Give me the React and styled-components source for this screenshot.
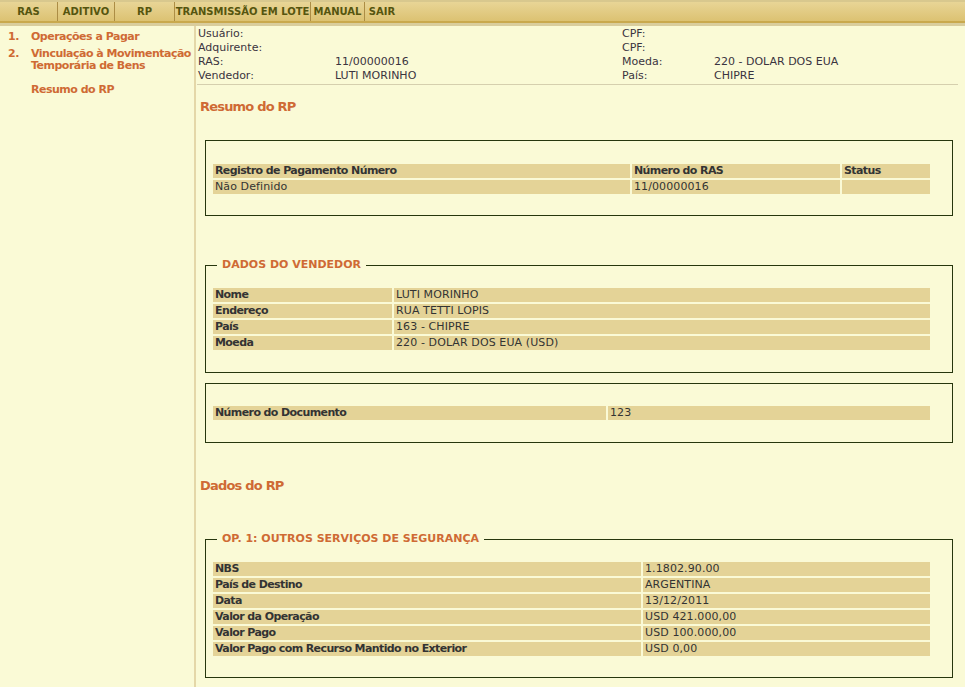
import React from 'react';
import styled, { createGlobalStyle } from "styled-components";

const GlobalStyle = createGlobalStyle`
    html, body {
        margin: 0;
        padding: 0;
        background: #fafad6;
    }
    body {
        font-family: "DejaVu Sans", Verdana, sans-serif;
        font-size: 11px;
        color: #333333;
    }
`;

const Page = styled.div`
    width: 965px;
    min-height: 687px;
    background: #fafad6;
`;

const MenuBar = styled.ul`
    display: flex;
    margin: 0;
    padding: 0;
    list-style: none;
    height: 19px;
    border-top: 2px solid #d8c88e;
    border-bottom: 2px solid #c9a94e;
    background: linear-gradient(#e8d596, #dcc272);
`;

const MenuItem = styled.li`
    width: ${props => props.w}px;
    height: 19px;
    line-height: 19px;
    text-align: center;
    font-size: 10px;
    font-weight: bold;
    color: #55550f;
    white-space: nowrap;
    border-right: 1px solid #ac8d45;
    &:last-child {
        border-right: none;
    }
`;

const MenuShade = styled.div`
    height: 3px;
    background: #d9cd9d;
`;

const Body = styled.div`
    display: flex;
    min-height: 661px;
`;

const Sidebar = styled.ul`
    width: 196px;
    flex-shrink: 0;
    margin: 0;
    padding: 5px 0 0 0;
    list-style: none;
    border-right: 2px solid #e4d7a8;
    box-sizing: border-box;
`;

const SideItem = styled.li`
    display: flex;
    font-weight: bold;
    letter-spacing: -0.5px;
    color: #cf6a34;
    line-height: 12px;
    margin-bottom: ${props => props.gap || 5}px;
`;

const SideNum = styled.span`
    width: 31px;
    padding-left: 8px;
    box-sizing: border-box;
    flex-shrink: 0;
`;

const Main = styled.div`
    flex: 1;
    padding: 1px 7px 0 1px;
`;

const InfoGrid = styled.div`
    display: grid;
    grid-template-columns: 137px 287px 92px 1fr;
    line-height: 14px;
    padding: 0 0 1px 1px;
    border-bottom: 1px solid #d5cfae;
    color: #3a3440;
`;

const Heading = styled.h2`
    margin: ${props => props.mt}px 0 0 3px;
    font-size: 13px;
    line-height: 16px;
    font-weight: bold;
    letter-spacing: -0.8px;
    color: #cf6a34;
`;

const Box = styled.fieldset`
    margin: ${props => props.mt}px 5px 0 8px;
    padding: ${props => props.pt}px 20px ${props => props.pb || 20}px 5px;
    border: 1px solid #26360d;
    min-width: 0;
`;

const Legend = styled.legend`
    margin-left: 6px;
    padding: 0 5px;
    font-weight: bold;
    line-height: 14px;
    color: #cf6a34;
`;

const Table = styled.div`
    display: grid;
    grid-template-columns: ${props => props.cols};
    gap: 2px;
    padding: 2px;
`;

const Cell = styled.div`
    height: 14px;
    line-height: 14px;
    padding: 0 2px;
    background: #e4d397;
    font-weight: ${props => (props.bold ? "bold" : "normal")};
    letter-spacing: ${props => (props.bold ? "-0.6px" : "0.1px")};
    color: #333333;
    white-space: nowrap;
    overflow: hidden;
`;

const info = [
    ["Usuário:", "", "CPF:", ""],
    ["Adquirente:", "", "CPF:", ""],
    ["RAS:", "11/00000016", "Moeda:", "220 - DOLAR DOS EUA"],
    ["Vendedor:", "LUTI MORINHO", "País:", "CHIPRE"],
];

const vendedor = [
    ["Nome", "LUTI MORINHO"],
    ["Endereço", "RUA TETTI LOPIS"],
    ["País", "163 - CHIPRE"],
    ["Moeda", "220 - DOLAR DOS EUA (USD)"],
];

const operacao = [
    ["NBS", "1.1802.90.00"],
    ["País de Destino", "ARGENTINA"],
    ["Data", "13/12/2011"],
    ["Valor da Operação", "USD 421.000,00"],
    ["Valor Pago", "USD 100.000,00"],
    ["Valor Pago com Recurso Mantido no Exterior", "USD 0,00"],
];

const menu = [
    ["RAS", 57],
    ["ADITIVO", 56],
    ["RP", 59],
    ["TRANSMISSÃO EM LOTE", 135],
    ["MANUAL", 53],
    ["SAIR", 34],
];

const Pairs = ({ cols, rows }) => (
    <Table cols={cols}>
        {rows.map(([label, value]) => (
            <React.Fragment key={label}>
                <Cell bold>{label}</Cell>
                <Cell>{value}</Cell>
            </React.Fragment>
        ))}
    </Table>
);

export default function App() {
    return (
        <Page>
            <GlobalStyle />
            <MenuBar>
                {menu.map(([text, w]) => (
                    <MenuItem key={text} w={w}>{text}</MenuItem>
                ))}
            </MenuBar>
            <MenuShade />
            <Body>
                <Sidebar>
                    <SideItem gap={5}>
                        <SideNum>1.</SideNum>
                        <span>Operações a Pagar</span>
                    </SideItem>
                    <SideItem gap={12}>
                        <SideNum>2.</SideNum>
                        <span>Vinculação à Movimentação Temporária de Bens</span>
                    </SideItem>
                    <SideItem>
                        <SideNum></SideNum>
                        <span>Resumo do RP</span>
                    </SideItem>
                </Sidebar>
                <Main>
                    <InfoGrid>
                        {info.map(row =>
                            row.map((text, i) => <span key={row[0] + i}>{text}</span>)
                        )}
                    </InfoGrid>
                    <Heading mt={14}>Resumo do RP</Heading>
                    <Box mt={25} pt={21} pb={19}>
                        <Table cols="417px 208px 1fr">
                            <Cell bold>Registro de Pagamento Número</Cell>
                            <Cell bold>Número do RAS</Cell>
                            <Cell bold>Status</Cell>
                            <Cell>Não Definido</Cell>
                            <Cell>11/00000016</Cell>
                            <Cell></Cell>
                        </Table>
                    </Box>
                    <Box mt={42} pt={14}>
                        <Legend>DADOS DO VENDEDOR</Legend>
                        <Pairs cols="179px 1fr" rows={vendedor} />
                    </Box>
                    <Box mt={10} pt={20}>
                        <Pairs cols="393px 1fr" rows={[["Número do Documento", "123"]]} />
                    </Box>
                    <Heading mt={35}>Dados do RP</Heading>
                    <Box mt={38} pt={14} pb={19}>
                        <Legend>OP. 1: OUTROS SERVIÇOS DE SEGURANÇA</Legend>
                        <Pairs cols="428px 1fr" rows={operacao} />
                    </Box>
                </Main>
            </Body>
        </Page>
    );
}
